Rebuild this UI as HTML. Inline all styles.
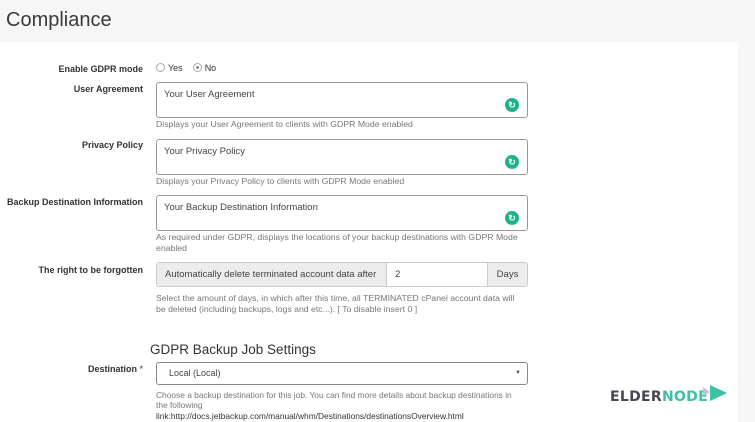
<!DOCTYPE html>
<html><head><meta charset="utf-8"><style>
*{box-sizing:border-box;margin:0;padding:0}
body{width:755px;height:422px;overflow:hidden;background:#fff;font-family:"Liberation Sans",sans-serif;position:relative;color:#333}
.hdr{position:absolute;left:0;top:0;width:755px;height:42px;background:#f6f6f6}
.hdr h1{position:absolute;left:6px;top:9px;font-size:20px;font-weight:normal;color:#3a3a3a}
.rstrip{position:absolute;left:738px;top:42px;width:17px;height:380px;background:#f7f7f7}
.lbl{position:absolute;right:612px;font-size:9px;font-weight:bold;color:#333;white-space:nowrap}
.ta{position:absolute;left:156px;width:372px;height:36px;border:1px solid #999;border-radius:3px;background:#fff;font-size:9.5px;color:#444;padding:6px 7px}
.g{position:absolute;right:8px;bottom:5px;width:14px;height:14px;border-radius:50%;background:#1fb28a;color:#fff;font-size:9px;font-weight:bold;text-align:center;line-height:14px}
.help{position:absolute;left:156px;font-size:8.7px;color:#777;line-height:10.5px;width:372px}
.radio{display:inline-block;width:9px;height:9px;border:1px solid #aaa;border-radius:50%;vertical-align:-1px;margin-right:3px;background:#fff;position:relative}
.radio.on::after{content:"";position:absolute;left:2px;top:2px;width:3px;height:3px;border-radius:50%;background:#888}
</style></head><body>
<div class="hdr"><h1>Compliance</h1></div>
<div class="rstrip"></div>

<div class="lbl" style="top:64px">Enable GDPR mode</div>
<div style="position:absolute;left:156px;top:63px;font-size:9px;color:#333"><span class="radio"></span>Yes&nbsp;&nbsp;&nbsp;&nbsp;<span class="radio on"></span>No</div>

<div class="lbl" style="top:84px">User Agreement</div>
<div class="ta" style="top:82px">Your User Agreement<div class="g">↻</div></div>
<div class="help" style="top:119px">Displays your User Agreement to clients with GDPR Mode enabled</div>

<div class="lbl" style="top:140px">Privacy Policy</div>
<div class="ta" style="top:139px">Your Privacy Policy<div class="g">↻</div></div>
<div class="help" style="top:176px">Displays your Privacy Policy to clients with GDPR Mode enabled</div>

<div class="lbl" style="top:197px">Backup Destination Information</div>
<div class="ta" style="top:195px">Your Backup Destination Information<div class="g">↻</div></div>
<div class="help" style="top:232px">As required under GDPR, displays the locations of your backup destinations with GDPR Mode enabled</div>

<div class="lbl" style="top:265px">The right to be forgotten</div>
<div style="position:absolute;left:156px;top:262px;width:372px;height:25px;border:1px solid #ccc;border-radius:3px;display:flex;font-size:9.5px;color:#444;overflow:hidden;white-space:nowrap">
 <div style="background:#ececec;padding:0 8px;line-height:23px;border-right:1px solid #ccc;width:230px">Automatically delete terminated account data after</div>
 <div style="flex:1;background:#fff;padding:0 8px;line-height:23px">2</div>
 <div style="background:#ececec;width:40px;text-align:center;line-height:23px;border-left:1px solid #ccc">Days</div>
</div>
<div class="help" style="top:293px;width:362px">Select the amount of days, in which after this time, all TERMINATED cPanel account data will be deleted (including backups, logs and etc...). [ To disable insert 0 ]</div>

<div style="position:absolute;left:150px;top:342px;font-size:13.5px;color:#333">GDPR Backup Job Settings</div>
<div class="lbl" style="top:364px">Destination <span style="font-weight:normal">*</span></div>
<div style="position:absolute;left:156px;top:362px;width:372px;height:23px;border:1px solid #888;border-radius:3px;font-size:9px;color:#444;padding:0 12px;line-height:21px">Local (Local)<span style="position:absolute;right:6px;font-size:6px;color:#555">▼</span></div>
<div class="help" style="top:390px;font-size:8.4px;line-height:10.3px;width:368px">Choose a backup destination for this job. You can find more details about backup destinations in the following<br><span style="color:#333">link:http://docs.jetbackup.com/manual/whm/Destinations/destinationsOverview.html</span></div>

<div style="position:absolute;left:610px;top:389px;font-size:14px;font-weight:bold;letter-spacing:0.3px;font-family:'DejaVu Sans',sans-serif"><span style="color:#4a4550">ELDER</span><span style="color:#3cc1a3">NODE</span></div>
<svg style="position:absolute;left:702px;top:382px" width="26" height="22"><polygon points="8,3 25,11 8,19" fill="#3cc1a3"/><polygon points="1,5 8,10 1,14" fill="#b9c6d2"/></svg>
</body></html>
